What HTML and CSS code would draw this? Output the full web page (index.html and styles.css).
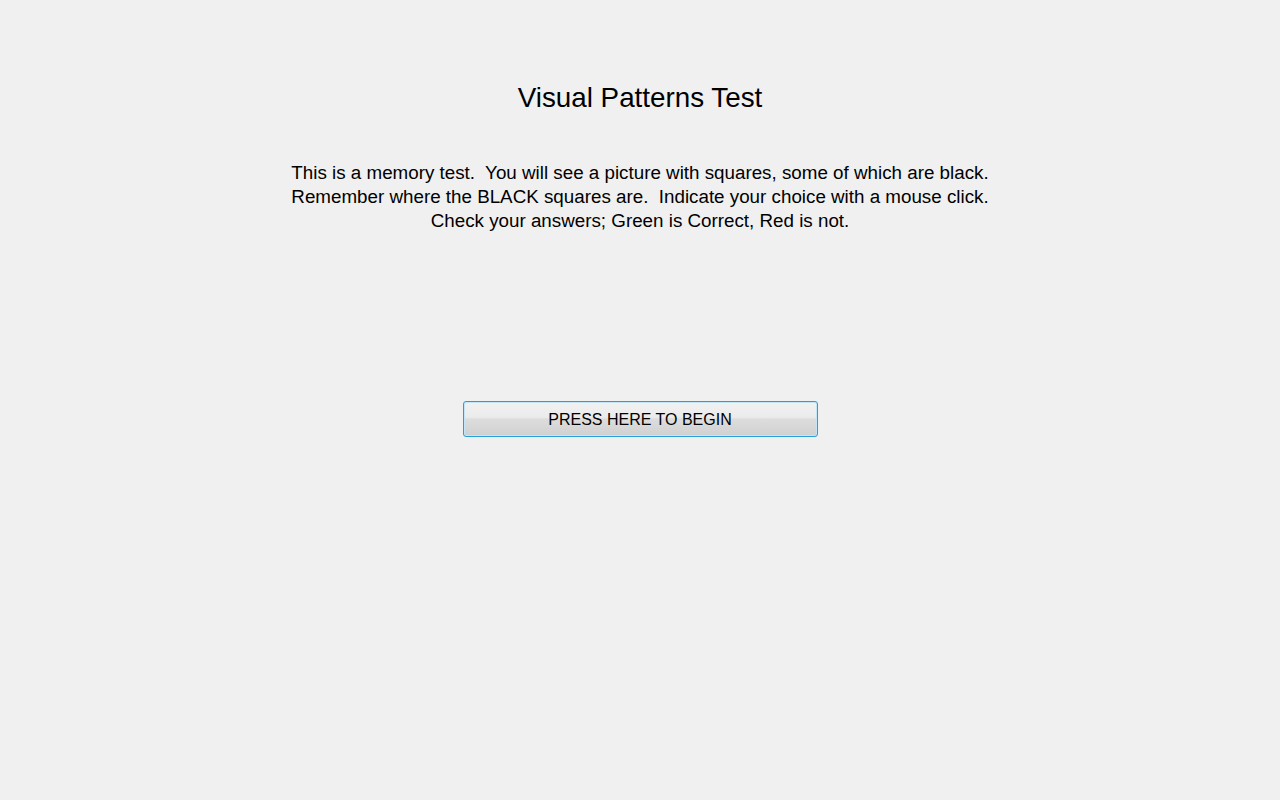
FILE: index.html
```html
<!DOCTYPE html>
<html>
<head>
<meta charset="utf-8">
<link rel="stylesheet" href="styles.css">
</head>
<body>
<main class="page">
  <h1 class="title">Visual Patterns Test</h1>
  <div class="intro">
    <p class="line">This is a memory test.  You will see a picture with squares, some of which are black.</p>
    <p class="line">Remember where the BLACK squares are.  Indicate your choice with a mouse click.</p>
    <p class="line">Check your answers; Green is Correct, Red is not.</p>
  </div>
  <button class="begin">PRESS HERE TO BEGIN</button>
</main>
</body>
</html>
```

FILE: styles.css
```css
html, body {
  margin: 0;
  padding: 0;
  background: #f0f0f0;
  font-family: "Liberation Sans", Arial, sans-serif;
  color: #000;
}
.page {
  width: 1280px;
  height: 800px;
  display: flex;
  flex-direction: column;
  align-items: center;
}
.title {
  margin: 82px 0 0;
  font-size: 27.8px;
  font-weight: normal;
  line-height: 32px;
}
.intro {
  margin-top: 47px;
  text-align: center;
  font-size: 18.8px;
  line-height: 24px;
}
.line {
  margin: 0;
  white-space: pre;
}
.begin {
  margin-top: 168px;
  width: 355px;
  height: 36px;
  border: 1px solid #26a0da;
  border-radius: 3px;
  background: linear-gradient(#f2f2f2 0%, #ebebeb 45%, #dddddd 50%, #d0d0d0 100%);
  font-family: "Liberation Sans", Arial, sans-serif;
  font-size: 16px;
  color: #000;
  padding: 1px 0 0;
  box-shadow: inset 0 0 0 1px #c4e5f6;
}
```
